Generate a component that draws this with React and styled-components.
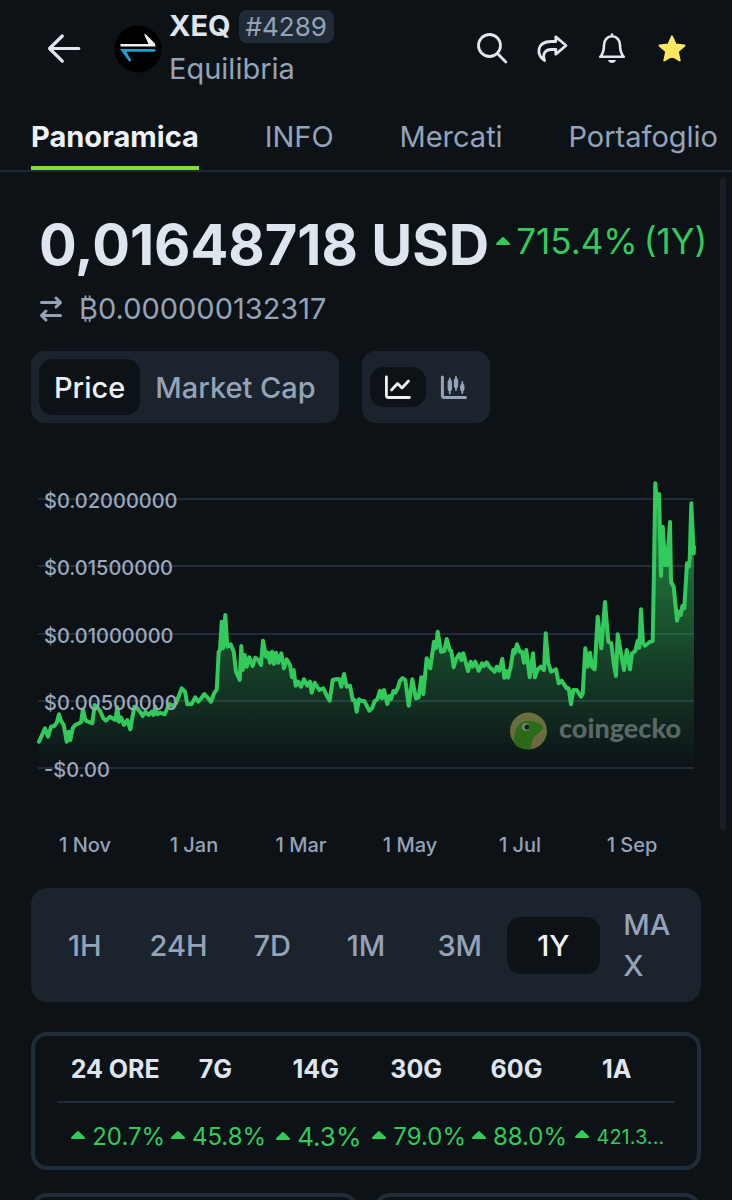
import React, { useState } from "react";
import styled, { createGlobalStyle } from "styled-components";

const GlobalStyle = createGlobalStyle`
  * {
    box-sizing: border-box;
  }

  body {
    margin: 0;
    background-color: #0d1217;
    color: #dfe5ef;
    font-family: "Inter", "Liberation Sans", sans-serif;
  }

  button {
    border: none;
    padding: 0;
    background: none;
    color: inherit;
    font-family: inherit;
    cursor: pointer;
  }
`;

const Page = styled.div`
  height: 100vh;
  display: flex;
  flex-direction: column;
`;

const Header = styled.header`
  display: flex;
  align-items: center;
  padding: 9px 42px 11px 46px;
`;

const IconButton = styled.button`
  width: 36px;
  height: 36px;
  color: ${(props) => (props.$starred ? "#ffe660" : "#e2e7ef")};

  svg {
    display: block;
  }
`;

const Coin = styled.div`
  display: flex;
  align-items: center;
  gap: 7px;
  flex: 1;
  margin-left: 32px;
`;

const CoinText = styled.div`
  display: flex;
  flex-direction: column;
  gap: 6px;
`;

const CoinTop = styled.div`
  display: flex;
  align-items: center;
  gap: 8px;
`;

const Symbol = styled.h1`
  margin: 0;
  font-size: 29px;
  line-height: 34px;
  font-weight: 700;
`;

const Rank = styled.span`
  padding: 0 7px;
  border-radius: 8px;
  background-color: #212b38;
  color: #94a3b8;
  font-size: 26px;
  line-height: 33px;
`;

const CoinName = styled.span`
  color: #94a3b8;
  font-size: 29px;
  line-height: 40px;
`;

const Actions = styled.div`
  display: flex;
  gap: 24px;
`;

const Tabs = styled.nav`
  display: flex;
  justify-content: space-between;
  padding: 17px 14px 0 31px;
  border-bottom: 2px solid #1f2836;
`;

const Tab = styled.a`
  padding-bottom: 9px;
  border-bottom: 4px solid ${(props) => (props.$active ? "#80e02f" : "transparent")};
  color: ${(props) => (props.$active ? "#eef2f7" : "#94a3b8")};
  font-size: 29px;
  line-height: 40px;
  font-weight: ${(props) => (props.$active ? 700 : 400)};
  text-decoration: none;
`;

const Body = styled.div`
  position: relative;
  flex: 1;
  min-height: 0;
`;

const Scroller = styled.main`
  height: 100%;
  overflow-y: auto;
  scrollbar-width: none;
`;

const ScrollThumb = styled.div`
  position: absolute;
  top: 6px;
  right: 6px;
  width: 6px;
  height: 652px;
  border-radius: 3px;
  background-color: #1a1e24;
`;

const PriceRow = styled.div`
  display: flex;
  align-items: flex-start;
  gap: 7px;
  padding: 39px 24px 0 39px;
  white-space: nowrap;
`;

const Price = styled.div`
  font-size: 56px;
  line-height: 68px;
  font-weight: 700;
`;

const Change = styled.div`
  display: flex;
  align-items: center;
  gap: 6px;
  color: #32ca5b;
  font-size: 35px;
  line-height: 60px;
`;

const BtcRow = styled.div`
  display: flex;
  align-items: center;
  gap: 15px;
  margin-top: 12px;
  padding: 0 38px;
  color: #94a3b8;
  font-size: 29px;
  line-height: 36px;
`;

const Controls = styled.div`
  display: flex;
  gap: 23px;
  margin-top: 24px;
  padding: 0 31px;
`;

const Segmented = styled.div`
  display: flex;
  align-items: center;
  padding: 8px;
  border-radius: 14px;
  background-color: #1b232d;
`;

const Segment = styled.button`
  height: 56px;
  padding: 0 15px;
  border-radius: 14px;
  background-color: ${(props) => (props.$active ? "#0d1217" : "transparent")};
  color: ${(props) => (props.$active ? "#eef2f7" : "#94a3b8")};
  font-size: 29px;
  font-weight: 500;
`;

const IconSegment = styled(Segment)`
  width: 56px;
  height: 40px;
  padding: 0 14px;

  svg {
    display: block;
  }
`;

const Chart = styled.svg`
  display: block;
  width: 100%;
  font-family: "Inter", "Liberation Sans", sans-serif;
  font-size: 20px;
  font-weight: 500;
`;

const Ranges = styled.div`
  display: grid;
  grid-template-columns: repeat(7, 1fr);
  align-items: center;
  margin: 16px 31px 0;
  padding: 16px 7px;
  border-radius: 16px;
  background-color: #1b232d;
`;

const Range = styled(Segment)`
  height: auto;
  min-height: 57px;
  padding: 0 ${(props) => (props.$wrap ? "23px" : "4px")};
  font-size: 29px;
  line-height: 41px;
  text-align: ${(props) => (props.$wrap ? "left" : "center")};
  word-break: ${(props) => (props.$wrap ? "break-all" : "normal")};
`;

const Card = styled.section`
  border: 4px solid #212c39;
  border-radius: 16px;
`;

const Returns = styled(Card)`
  margin: 30px 31px 0;
  padding: 0 22px;
`;

const ReturnsTable = styled.table`
  width: 100%;
  table-layout: fixed;
  border-collapse: collapse;

  th,
  td {
    padding: 0;
    text-align: center;
    white-space: nowrap;
  }

  thead tr {
    border-bottom: 2px solid #212b38;
  }

  th {
    height: 66px;
    font-size: 25px;
    font-weight: 700;
  }

  td {
    height: 64px;
    color: #32ca5b;
  }
`;

const Edge = styled.col`
  width: 8px;
`;

const Value = styled.div`
  display: flex;
  align-items: baseline;
  justify-content: center;
  gap: 7px;
  padding: 4px 0 0 6px;
  font-size: ${(props) => props.$size}px;
  line-height: 32px;

  svg {
    flex: none;
    padding-bottom: 6px;
    box-sizing: content-box;
  }
`;

const Stats = styled.div`
  display: grid;
  grid-template-columns: 1fr 1fr;
  gap: 16px;
  padding: 23px 31px 31px;
`;

const StatCard = styled(Card)`
  height: 120px;
`;

const returns = [
  { label: "24 ORE", value: "20.7%", size: 24 },
  { label: "7G", value: "45.8%", size: 24 },
  { label: "14G", value: "4.3%", size: 26 },
  { label: "30G", value: "79.0%", size: 24 },
  { label: "60G", value: "88.0%", size: 24 },
  { label: "1A", value: "421.3...", size: 20 },
];

const gridLines = [
  { y: 499, label: "$0.02000000" },
  { y: 566, label: "$0.01500000" },
  { y: 634, label: "$0.01000000" },
  { y: 701, label: "$0.00500000" },
  { y: 768, label: "-$0.00" },
];

const months = [
  { x: 85, label: "1 Nov" },
  { x: 194, label: "1 Jan" },
  { x: 301, label: "1 Mar" },
  { x: 410, label: "1 May" },
  { x: 520, label: "1 Jul" },
  { x: 632, label: "1 Sep" },
];

// each part of the year has its own origin, three steps to one chart unit
const series = [
  {
    x: 20,
    y: 470,
    points: [
      [57, 815], [66, 795], [75, 775], [84, 800], [93, 770], [103, 768], [110, 758], [117, 733],
      [122, 750], [131, 765], [140, 815], [146, 785], [151, 810], [158, 775], [166, 765], [183, 757],
      [189, 718], [196, 750], [204, 755], [217, 760], [224, 705], [231, 712], [240, 722], [250, 745],
      [258, 752], [270, 740], [286, 750], [292, 712], [297, 755], [303, 742], [312, 765], [322, 750],
      [331, 778], [343, 710], [352, 715], [360, 725], [368, 738], [376, 725], [386, 735], [395, 725],
      [400, 735], [406, 710], [412, 733], [420, 728], [434, 733], [448, 702], [458, 708], [468, 700],
      [485, 655], [495, 665], [502, 703], [515, 702], [526, 682], [535, 695], [545, 683], [553, 672],
      [565, 685], [573, 695], [583, 668], [590, 660], [596, 545], [600, 540], [605, 455], [609, 535],
      [616, 435], [622, 530], [632, 523], [641, 545], [648, 605], [659, 630],
    ],
  },
  {
    x: 240,
    y: 590,
    points: [
      [4, 168], [8, 240], [14, 195], [20, 230], [28, 202], [38, 228], [46, 203], [55, 210],
      [63, 225], [69, 152], [78, 200], [84, 188], [90, 218], [96, 185], [102, 222], [108, 188],
      [115, 218], [124, 190], [132, 235], [140, 208], [150, 225], [156, 262], [161, 240], [167, 287],
      [175, 275], [183, 290], [192, 268], [202, 287], [210, 275], [215, 308], [224, 278], [238, 300],
      [250, 295], [262, 320], [269, 332], [278, 270], [290, 267], [298, 268], [304, 290], [312, 252],
      [320, 290], [330, 287], [338, 330], [344, 330], [350, 365], [357, 328], [364, 333], [373, 333],
      [388, 362], [396, 355], [404, 333], [412, 328], [420, 302], [426, 325], [432, 300], [442, 342],
      [448, 318], [453, 328], [460, 303], [466, 308], [474, 292], [480, 272], [488, 264], [496, 270],
      [506, 347], [517, 268], [528, 325], [536, 322], [544, 262], [550, 312], [560, 205], [571, 235],
      [582, 155], [588, 175], [593, 125], [603, 185], [613, 183], [620, 147], [629, 180], [634, 183],
      [641, 232], [648, 208], [658, 192], [664, 210], [670, 190], [684, 243], [692, 215],
    ],
  },
  {
    x: 470,
    y: 470,
    points: [
      [8, 590], [16, 575], [26, 602], [36, 580], [42, 588], [50, 577], [58, 590], [74, 605],
      [80, 590], [88, 602], [97, 567], [103, 623], [108, 603], [114, 623], [122, 590], [130, 540],
      [134, 550], [141, 523], [149, 545], [156, 545], [162, 578], [169, 540], [179, 622], [189, 550],
      [195, 622], [202, 600], [212, 590], [222, 600], [227, 490], [235, 580], [243, 605], [258, 598],
      [266, 640], [275, 632], [290, 655], [296, 655], [303, 703], [310, 660], [320, 660], [333, 680],
      [338, 670], [346, 535], [353, 590], [360, 548], [366, 590], [374, 598], [383, 440], [394, 535],
      [405, 396], [415, 515], [424, 520], [431, 580], [438, 618], [443, 493], [452, 545], [462, 600],
      [470, 540], [480, 598], [486, 550], [496, 543], [503, 512], [508, 533], [513, 418], [519, 520],
      [525, 527], [540, 515], [548, 513], [552, 300], [556, 40], [561, 105], [567, 72], [573, 318],
      [578, 170], [586, 285], [591, 285], [600, 156], [603, 335], [611, 350], [621, 452], [627, 425],
      [632, 435], [637, 408], [643, 415], [651, 280], [656, 290], [659, 270], [664, 100], [671, 250],
      [672, 230],
    ],
  },
];

const linePoints = series
  .flatMap((part) => part.points.map(([x, y]) => `${(part.x + x / 3).toFixed(1)},${(part.y + y / 3).toFixed(1)}`))
  .join(" ");

const Up = () => (
  <svg width="14" height="8" viewBox="0 0 14 8" fill="currentColor" aria-hidden="true">
    <path d="M6.1.4a1.300 1.300 0 0 1 1.800 0l5.700 5.700c.8.8.3 1.900-.8 1.900H1.200C.1 8-.4 6.900.4 6.100z" />
  </svg>
);

const CoinLogo = () => (
  <svg width="48" height="48" viewBox="0 0 48 48" aria-hidden="true">
    <circle cx="24" cy="24" r="23.500" fill="#000" />
    <path d="M6.500 18.900h28L30.200 9.500l1.300-.5 9.500 9.400.5 3.200h-35z" fill="#f3efee" />
    <path d="M6 24h35.300v2.800H12.300l5.200 8.700-2.200 1.300z" fill="#1e9fcb" />
  </svg>
);

const PriceChart = () => (
  <Chart viewBox="0 423 732 449" role="img" aria-label="XEQ price, 1 year">
    <defs>
      <linearGradient id="area" gradientUnits="userSpaceOnUse" x1="0" y1="480" x2="0" y2="766">
        <stop offset="0" stopColor="#32ca5b" stopOpacity="0.700" />
        <stop offset="1" stopColor="#32ca5b" stopOpacity="0" />
      </linearGradient>
    </defs>
    {gridLines.map((line) => (
      <line key={line.y} x1="38" x2="694" y1={line.y} y2={line.y} stroke="#222c39" strokeWidth="2" />
    ))}
    <polygon points={`39,768 ${linePoints} 694,768`} fill="url(#area)" />
    <polyline
      points={linePoints}
      fill="none"
      stroke="#32ca5b"
      strokeWidth="4"
      strokeLinejoin="round"
      strokeLinecap="round"
    />
    {gridLines.map((line) => (
      <text key={line.y} x="44" y={line.y + 9} fill="#9aa8bd">
        {line.label}
      </text>
    ))}
    <g opacity="0.6">
      <circle cx="528.500" cy="731" r="18.500" fill="#a89d55" />
      <path
        d="M514.500 744c-1-8 .5-20 10-22.500 6-1.500 10-.5 14 2 4 1 5 3 4 5.500-2 4-7 5-9.500 10-1.200 2.500-1.500 6-2 9.800-7 1-13.500-.8-16.500-4.800z"
        fill="#3f9c16"
      />
      <circle cx="526" cy="727" r="3.800" fill="#c9d2cc" />
      <circle cx="527" cy="727" r="2.600" fill="#14201b" />
    </g>
    <text x="559" y="738" fill="#586966" fontFamily="Lato" fontSize="27" fontWeight="900">
      coingecko
    </text>
    {months.map((month) => (
      <text key={month.label} x={month.x} y="852" fill="#94a3b8" textAnchor="middle">
        {month.label}
      </text>
    ))}
  </Chart>
);

const App = () => {
  const [metric, setMetric] = useState("Price");
  const [kind, setKind] = useState("line");
  const [range, setRange] = useState("1Y");

  return (
    <Page>
      <GlobalStyle />
      <Header>
        <IconButton aria-label="Back">
          <svg width="36" height="36" viewBox="0 0 36 36" fill="none" stroke="currentColor" strokeWidth="3.200" strokeLinecap="round" strokeLinejoin="round">
            <path d="M32.800 17.500H3.500M16.300 5 3.500 17.500l12.800 12.700" />
          </svg>
        </IconButton>
        <Coin>
          <CoinLogo />
          <CoinText>
            <CoinTop>
              <Symbol>XEQ</Symbol>
              <Rank>#4289</Rank>
            </CoinTop>
            <CoinName>Equilibria</CoinName>
          </CoinText>
        </Coin>
        <Actions>
          <IconButton aria-label="Search">
            <svg width="36" height="36" viewBox="0 0 36 36" fill="none" stroke="currentColor" strokeWidth="2.800" strokeLinecap="round">
              <circle cx="15.500" cy="14.500" r="11" />
              <path d="m23.700 22.700 8.200 8.200" />
            </svg>
          </IconButton>
          <IconButton aria-label="Share">
            <svg width="36" height="36" viewBox="0 0 36 36" fill="none" stroke="currentColor" strokeWidth="2.800" strokeLinecap="round" strokeLinejoin="round">
              <path d="M21.800 5.800 32 14.500l-10.200 8.700v-4.700h-4.600c-6.500 0-9 5-6.600 11-8.300-4.500-8.800-19 6.600-19h4.600z" />
            </svg>
          </IconButton>
          <IconButton aria-label="Alerts">
            <svg width="36" height="36" viewBox="0 0 36 36" fill="none" stroke="currentColor" strokeWidth="2.600" strokeLinecap="round" strokeLinejoin="round">
              <path d="M6.200 25.800h23.600c-3.300-3.300-3.800-6.300-3.800-11.800 0-5-3.200-8.700-8-8.700S10 9 10 14c0 5.500-.5 8.500-3.800 11.800zM18 3.500v1.500" />
              <path d="M14.100 28.900h7.800c-.4 4-7.400 4-7.800 0z" fill="currentColor" stroke="none" />
            </svg>
          </IconButton>
          <IconButton aria-label="Favourite" $starred>
            <svg width="36" height="36" viewBox="0 0 36 36" fill="currentColor" stroke="currentColor" strokeWidth="2" strokeLinejoin="round">
              <path d="m18 5.300 3.600 8.200 8.900.9-6.700 6 1.900 9.100-7.700-4.500-7.700 4.500 1.900-9.100-6.700-6 8.900-.9z" />
            </svg>
          </IconButton>
        </Actions>
      </Header>

      <Tabs>
        <Tab href="#panoramica" $active>Panoramica</Tab>
        <Tab href="#info">INFO</Tab>
        <Tab href="#mercati">Mercati</Tab>
        <Tab href="#portafoglio">Portafoglio</Tab>
      </Tabs>

      <Body>
        <Scroller>
          <PriceRow>
            <Price>0,01648718 USD</Price>
            <Change>
              <Up />
              <span>715.4%</span>
              <span>(1Y)</span>
            </Change>
          </PriceRow>
          <BtcRow>
            <svg width="26" height="28" viewBox="0 0 26 28" fill="none" stroke="currentColor" strokeWidth="3" strokeLinecap="round" strokeLinejoin="round" aria-hidden="true">
              <path d="M3.500 7.500h19M18 3l4.500 4.500L18 12M22.500 20.500h-19M8 16l-4.500 4.500L8 25" />
            </svg>
            ₿0.000000132317
          </BtcRow>

          <Controls>
            <Segmented>
              {["Price", "Market Cap"].map((item) => (
                <Segment key={item} $active={metric === item} onClick={() => setMetric(item)}>
                  {item}
                </Segment>
              ))}
            </Segmented>
            <Segmented>
              <IconSegment aria-label="Line chart" $active={kind === "line"} onClick={() => setKind("line")}>
                <svg width="28" height="26" viewBox="0 0 28 26" fill="none" stroke="currentColor" strokeWidth="2.800" strokeLinecap="round" strokeLinejoin="round">
                  <path d="M2.400 3v18.500q0 2 2 2h21M7.500 16l6-6.500 4.500 4.500 6.500-7" />
                </svg>
              </IconSegment>
              <IconSegment aria-label="Candlestick chart" $active={kind === "candle"} onClick={() => setKind("candle")}>
                <svg width="28" height="26" viewBox="0 0 28 26" fill="none" stroke="currentColor" strokeLinecap="round" strokeLinejoin="round">
                  <path d="M2.400 3v18.500q0 2 2 2h21" strokeWidth="3" />
                  <path d="M9.800 4.500v15M16 3v13M22.300 8v11" strokeWidth="1.800" />
                  <path d="M9.800 8v7M16 6.500v5.500M22.300 12v3" strokeWidth="4.400" />
                </svg>
              </IconSegment>
            </Segmented>
          </Controls>

          <PriceChart />

          <Ranges>
            {["1H", "24H", "7D", "1M", "3M", "1Y", "MAX"].map((item) => (
              <Range key={item} $active={range === item} $wrap={item === "MAX"} onClick={() => setRange(item)}>
                {item}
              </Range>
            ))}
          </Ranges>

          <Returns>
            <ReturnsTable>
              <colgroup>
                <Edge />
                {returns.map((item) => (
                  <col key={item.label} />
                ))}
                <Edge />
              </colgroup>
              <thead>
                <tr>
                  <td />
                  {returns.map((item) => (
                    <th key={item.label} scope="col">{item.label}</th>
                  ))}
                  <td />
                </tr>
              </thead>
              <tbody>
                <tr>
                  <td />
                  {returns.map((item) => (
                    <td key={item.label}>
                      <Value $size={item.size}>
                        <Up />
                        {item.value}
                      </Value>
                    </td>
                  ))}
                  <td />
                </tr>
              </tbody>
            </ReturnsTable>
          </Returns>

          <Stats>
            <StatCard />
            <StatCard />
          </Stats>
        </Scroller>
        <ScrollThumb />
      </Body>
    </Page>
  );
};

export default App;
